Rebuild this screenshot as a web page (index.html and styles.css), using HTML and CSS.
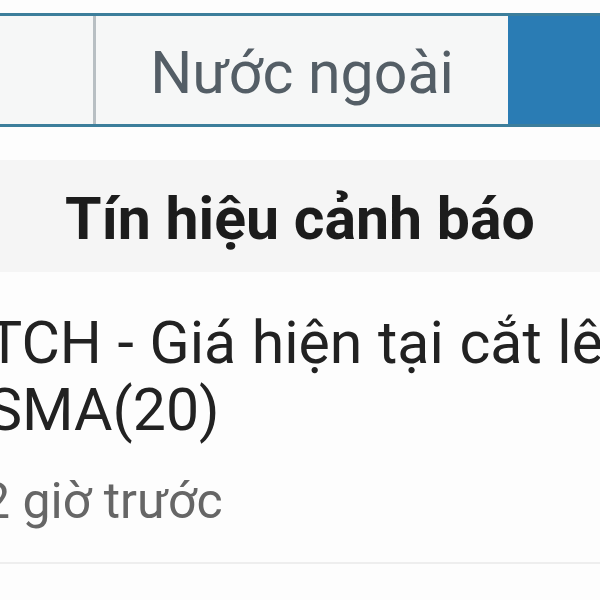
FILE: index.html
```html
<!DOCTYPE html>
<html lang="vi">
<head>
<meta charset="utf-8">
<link rel="stylesheet" href="styles.css">
</head>
<body>
<div class="page">
  <nav class="tabs">
    <div class="tab tab-first"></div>
    <div class="tab tab-mid">Nước ngoài</div>
    <div class="tab tab-active"></div>
  </nav>
  <h2 class="section-title">Tín hiệu cảnh báo</h2>
  <ul class="alerts">
    <li class="alert">
      <p class="alert-text">TCH - Giá hiện tại cắt lên SMA(20)</p>
      <p class="alert-time">2 giờ trước</p>
    </li>
  </ul>
</div>
</body>
</html>
```
FILE: styles.css
```css
html, body {
  margin: 0;
  padding: 0;
  overflow: hidden;
  background: #fdfdfd;
  font-family: Roboto, "Noto Sans", sans-serif;
}
.page {
  width: 600px;
  padding-top: 13px;
}
.tabs {
  display: flex;
  height: 108px;
  border-top: 3px solid #3c7e9b;
  border-bottom: 3px solid #3c7e9b;
  background: #f6f7f7;
}
.tab {
  display: flex;
  align-items: center;
  justify-content: center;
}
.tab-first {
  width: 93px;
  border-right: 3px solid #b8bfc3;
}
.tab-mid {
  width: 412px;
  font-size: 59px;
  color: #545e66;
  padding-top: 4px;
  box-sizing: border-box;
}
.tab-active {
  flex: 1;
  background: #2a7cb4;
}
.section-title {
  margin: 33px 0 0;
  height: 112px;
  box-sizing: border-box;
  padding-top: 5px;
  display: flex;
  align-items: center;
  justify-content: center;
  background: #f5f5f5;
  font-size: 59px;
  font-weight: 700;
  color: #1c1c1c;
}
.alerts {
  list-style: none;
  margin: 0;
  padding: 0;
}
.alert {
  width: 690px;
  margin-left: -13px;
  padding: 37px 0 31px 0;
  border-bottom: 2px solid #eeeeee;
}
.alert-text {
  margin: 0;
  font-size: 59px;
  line-height: 67px;
  word-spacing: 1px;
  color: #222222;
}
.alert-time {
  margin: 29px 0 0 -5px;
  font-size: 50px;
  line-height: 59px;
  color: #666666;
}
```
